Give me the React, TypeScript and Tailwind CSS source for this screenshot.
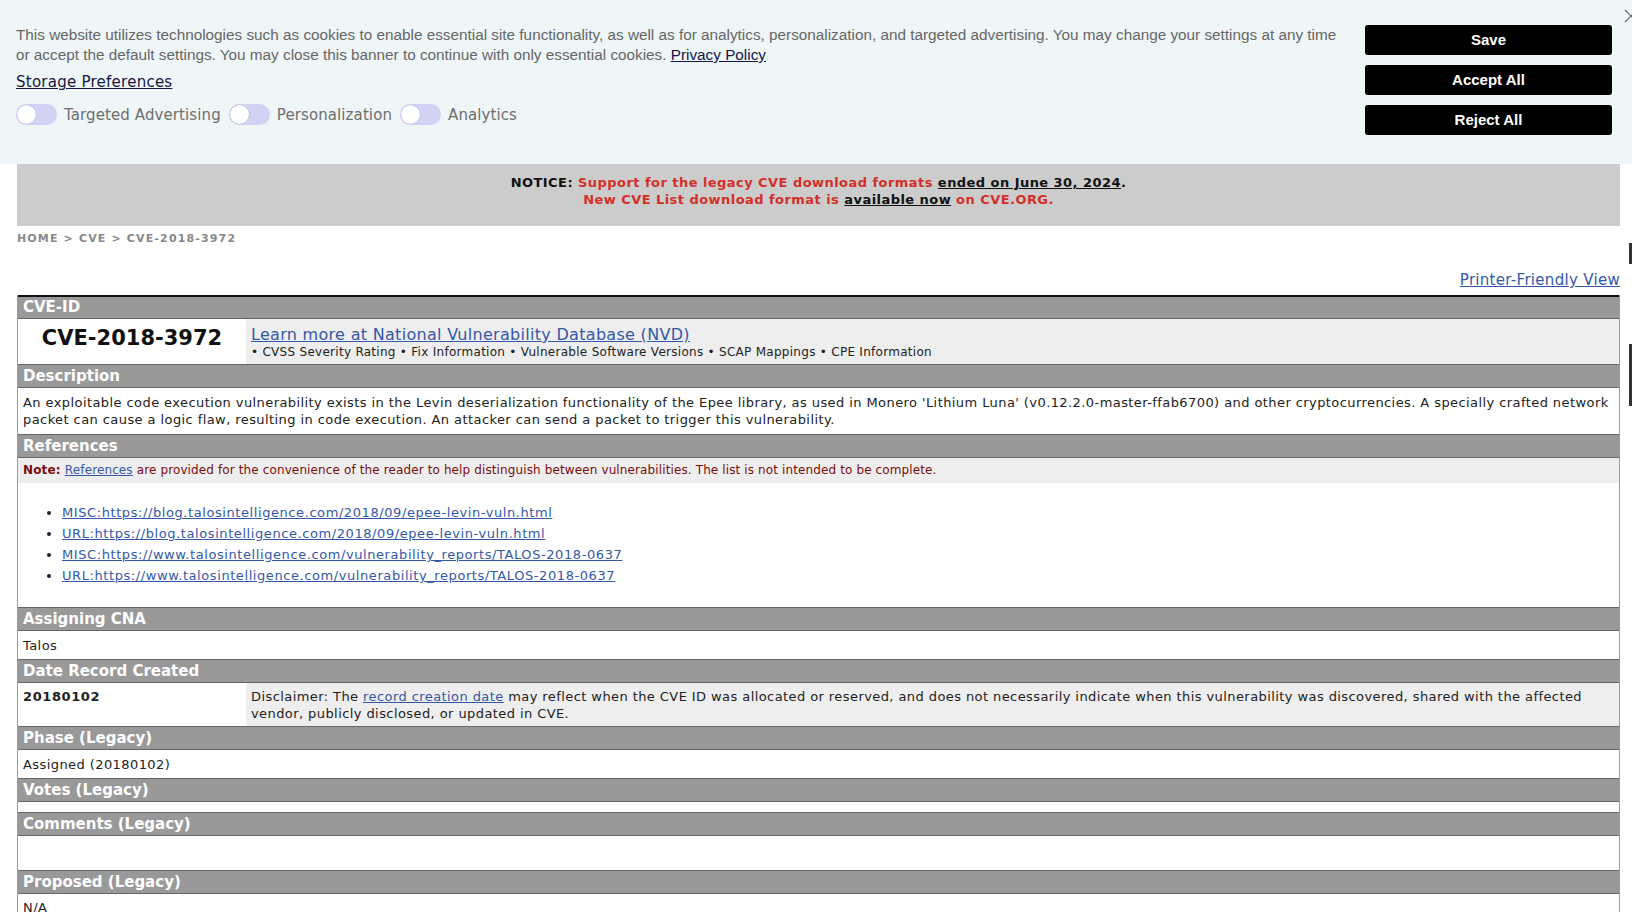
import React from "react";

const verdana = { fontFamily: '"DejaVu Sans", Verdana, sans-serif' };
const arial = { fontFamily: '"Liberation Sans", Arial, sans-serif' };

const Toggle = ({ label }: { label: string }) => (
  <div className="flex items-center">
    <span className="relative inline-block w-[41px] h-[21px] rounded-full bg-[#d2d2f5]">
      <span className="absolute left-[1px] top-[1px] w-[19px] h-[19px] rounded-full bg-white shadow-[0_0_1px_rgba(0,0,0,0.35)]" />
    </span>
    <span className="ml-[7px] text-[15px] leading-[18px] tracking-[0.1px] text-[#6e6e6e]">{label}</span>
  </div>
);

const CookieBanner = () => (
  <div className="relative h-[164px] bg-[#eef6f8] flex pl-[16px] pr-[20px] pt-[25px]">
    <div className="flex-1 pr-[22px]">
      <p className="text-[15.3px] leading-[20px] text-[#666] whitespace-nowrap" style={arial}>
        This website utilizes technologies such as cookies to enable essential site functionality, as well as for
        analytics, personalization, and targeted advertising. You may change your settings at any time
        <br />
        or accept the default settings. You may close this banner to continue with only essential cookies.{" "}
        <a href="#" className="underline text-[#14144a]">
          Privacy Policy
        </a>
      </p>
      <a
        href="#"
        className="mt-[8px] inline-block text-[15px] leading-[18px] tracking-[0.25px] underline text-[#16163f]"
        style={verdana}
      >
        Storage Preferences
      </a>
      <div className="mt-[10px] flex items-center gap-[8px]" style={verdana}>
        <Toggle label="Targeted Advertising" />
        <Toggle label="Personalization" />
        <Toggle label="Analytics" />
      </div>
    </div>
    <div className="w-[247px] flex flex-col gap-[10px]" style={arial}>
      {["Save", "Accept All", "Reject All"].map((b) => (
        <button key={b} className="h-[30px] rounded-[3px] bg-black text-white font-bold text-[15px]">
          {b}
        </button>
      ))}
    </div>
    <svg className="absolute right-[-6px] top-[9px]" width="14" height="14" viewBox="0 0 14 14">
      <path d="M1 1 L13 13 M13 1 L1 13" stroke="#6b6b6b" strokeWidth="1.2" fill="none" />
    </svg>
  </div>
);

const Header = ({ children, first }: { children: React.ReactNode; first?: boolean }) => (
  <div
    className={
      first
        ? "h-[24px] bg-[#999] border-t-2 border-t-[#111] border-b border-b-[#666] pl-[5px] text-white font-bold text-[15px] leading-[21px] tracking-normal"
        : "h-[24px] bg-[#999] border-t border-t-[#666] border-b border-b-[#666] pl-[5px] text-white font-bold text-[15px] leading-[22px] tracking-normal"
    }
  >
    {children}
  </div>
);

const refs = [
  "MISC:https://blog.talosintelligence.com/2018/09/epee-levin-vuln.html",
  "URL:https://blog.talosintelligence.com/2018/09/epee-levin-vuln.html",
  "MISC:https://www.talosintelligence.com/vulnerability_reports/TALOS-2018-0637",
  "URL:https://www.talosintelligence.com/vulnerability_reports/TALOS-2018-0637",
];

const link = "text-[#3458a8] underline";

export default function App() {
  return (
    <div className="relative h-screen overflow-hidden bg-white text-[#222]" style={verdana}>
      <CookieBanner />
      <main className="ml-[17px] mr-[12px]">
        <div className="h-[62px] bg-[#cccccc] pt-[10px] text-center font-bold text-[13px] leading-[17px] tracking-[0.45px]">
          <div>
            <span className="text-[#111]">NOTICE: </span>
            <span className="text-[#d3302a]">Support for the legacy CVE download formats </span>
            <a href="#" className="underline text-[#111]">
              ended on June 30, 2024
            </a>
            <span className="text-[#111]">.</span>
          </div>
          <div className="text-[#d3302a]">
            New CVE List download format is{" "}
            <a href="#" className="underline text-[#111]">
              available now
            </a>{" "}
            on CVE.ORG.
          </div>
        </div>

        <div className="mt-[6px] text-[11px] leading-[14px] font-bold tracking-[1.15px] text-[#888]">
          HOME &gt; CVE &gt; CVE-2018-3972
        </div>

        <div className="mt-[25px] text-right text-[15px] leading-[18px] tracking-[0.3px]">
          <a href="#" className={link}>
            Printer-Friendly View
          </a>
        </div>

        <div className="mt-[6px] border-x border-[#9a9a9a] text-[13px] leading-[17px] tracking-[0.42px]">
          <Header first>CVE-ID</Header>
          <div className="flex h-[45px]">
            <div className="w-[228px] bg-white flex items-center justify-center font-bold text-[21px] tracking-normal text-[#111] pb-[6px]">
              CVE-2018-3972
            </div>
            <div className="flex-1 bg-[#eeeeee] pl-[5px] pt-[6px]">
              <a href="#" className={link + " text-[16px] leading-[19px] tracking-[0.3px] block w-max"}>
                Learn more at National Vulnerability Database (NVD)
              </a>
              <div className="text-[12px] leading-[16px] tracking-[0.28px] text-[#222]">
                • CVSS Severity Rating • Fix Information • Vulnerable Software Versions • SCAP Mappings • CPE
                Information
              </div>
            </div>
          </div>

          <Header>Description</Header>
          <div className="h-[46px] pl-[5px] pt-[6px]">
            An exploitable code execution vulnerability exists in the Levin deserialization functionality of the Epee
            library, as used in Monero 'Lithium Luna' (v0.12.2.0-master-ffab6700) and other cryptocurrencies. A
            specially crafted network packet can cause a logic flaw, resulting in code execution. An attacker can send
            a packet to trigger this vulnerability.
          </div>

          <Header>References</Header>
          <div className="h-[25px] bg-[#eeeeee] pl-[5px] pt-[4px] text-[12px] leading-[16px] tracking-[0.12px] text-[#7a0c0c]">
            <span className="font-bold">Note: </span>
            <a href="#" className={link}>
              References
            </a>{" "}
            are provided for the convenience of the reader to help distinguish between vulnerabilities. The list is not
            intended to be complete.
          </div>
          <ul className="h-[124px] pt-[19px] pl-[44px] list-disc marker:text-[#222] tracking-[0.58px]">
            {refs.map((r) => (
              <li key={r} className="h-[21px] leading-[21px]">
                <a href="#" className={link}>
                  {r}
                </a>
              </li>
            ))}
          </ul>

          <Header>Assigning CNA</Header>
          <div className="h-[28px] pl-[5px] pt-[6px]">Talos</div>

          <Header>Date Record Created</Header>
          <div className="flex h-[43px]">
            <div className="w-[228px] pl-[5px] pt-[5px] font-bold tracking-[0.6px]">20180102</div>
            <div className="flex-1 bg-[#eeeeee] pl-[5px] pt-[5px]">
              Disclaimer: The{" "}
              <a href="#" className={link}>
                record creation date
              </a>{" "}
              may reflect when the CVE ID was allocated or reserved, and does not necessarily indicate when this
              vulnerability was discovered, shared with the affected vendor, publicly disclosed, or updated in CVE.
            </div>
          </div>

          <Header>Phase (Legacy)</Header>
          <div className="h-[28px] pl-[5px] pt-[6px]">Assigned (20180102)</div>

          <Header>Votes (Legacy)</Header>
          <div className="h-[10px]" />

          <Header>Comments (Legacy)</Header>
          <div className="h-[34px]" />

          <Header>Proposed (Legacy)</Header>
          <div className="h-[28px] pl-[5px] pt-[5px]">N/A</div>
        </div>
      </main>

      <div className="absolute right-0 top-[243px] w-[3px] h-[21px] bg-[#333]" />
      <div className="absolute right-0 top-[344px] w-[3px] h-[62px] bg-[#333]" />
    </div>
  );
}
